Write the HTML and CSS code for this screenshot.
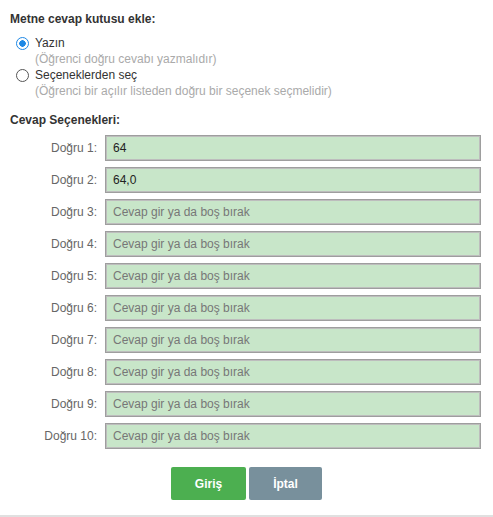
FILE: index.html
```html
<!DOCTYPE html>
<html>
<head>
<meta charset="utf-8">
<link rel="stylesheet" href="styles.css">
</head>
<body>
<div class="dialog">
  <div class="title">Metne cevap kutusu ekle:</div>
  <div class="options">
    <label class="option">
      <input type="radio" name="mode" class="radio" checked>
      <span class="option-text">
        <span class="option-label">Yazın</span>
        <span class="option-hint">(Öğrenci doğru cevabı yazmalıdır)</span>
      </span>
    </label>
    <label class="option">
      <input type="radio" name="mode" class="radio">
      <span class="option-text">
        <span class="option-label">Seçeneklerden seç</span>
        <span class="option-hint">(Öğrenci bir açılır listeden doğru bir seçenek seçmelidir)</span>
      </span>
    </label>
  </div>
  <div class="title section">Cevap Seçenekleri:</div>
  <div class="answers">
    <label class="answer-label">Doğru 1:</label><input class="answer" type="text" value="64">
    <label class="answer-label">Doğru 2:</label><input class="answer" type="text" value="64,0">
    <label class="answer-label">Doğru 3:</label><input class="answer" type="text" placeholder="Cevap gir ya da boş bırak">
    <label class="answer-label">Doğru 4:</label><input class="answer" type="text" placeholder="Cevap gir ya da boş bırak">
    <label class="answer-label">Doğru 5:</label><input class="answer" type="text" placeholder="Cevap gir ya da boş bırak">
    <label class="answer-label">Doğru 6:</label><input class="answer" type="text" placeholder="Cevap gir ya da boş bırak">
    <label class="answer-label">Doğru 7:</label><input class="answer" type="text" placeholder="Cevap gir ya da boş bırak">
    <label class="answer-label">Doğru 8:</label><input class="answer" type="text" placeholder="Cevap gir ya da boş bırak">
    <label class="answer-label">Doğru 9:</label><input class="answer" type="text" placeholder="Cevap gir ya da boş bırak">
    <label class="answer-label">Doğru 10:</label><input class="answer" type="text" placeholder="Cevap gir ya da boş bırak">
  </div>
  <div class="buttons">
    <button class="btn btn-ok">Giriş</button>
    <button class="btn btn-cancel">İptal</button>
  </div>
</div>
</body>
</html>
```
FILE: styles.css
```css
html, body {
  margin: 0;
  padding: 0;
  background: #fff;
}
body {
  font-family: "Liberation Sans", Arial, sans-serif;
  font-size: 12px;
  color: #333;
}
.dialog {
  width: 493px;
  box-sizing: border-box;
  padding: 11px 12px 15px 10px;
  border-bottom: 2px solid #e0e0e0;
}
.title {
  font-weight: bold;
  font-size: 12px;
  line-height: 16px;
  color: #333;
}
.section {
  margin-top: 13px;
}
.options {
  margin-top: 8px;
  padding-left: 6px;
  display: flex;
  flex-direction: column;
}
.option {
  display: flex;
  align-items: flex-start;
  gap: 6px;
}
.radio {
  appearance: none;
  -webkit-appearance: none;
  margin: 2px 0 0 0;
  width: 13px;
  height: 13px;
  border: 1px solid #555;
  border-radius: 50%;
  box-sizing: border-box;
  background: #fff;
  flex: none;
}
.radio:checked {
  border-color: #1e88e5;
  background: radial-gradient(circle, #1e88e5 0 3px, #fff 3.5px);
}
.option-text {
  display: flex;
  flex-direction: column;
  line-height: 16px;
}
.option-label {
  color: #333;
}
.option-hint {
  color: #aaa;
}
.answers {
  margin-top: 7px;
  display: grid;
  grid-template-columns: 87px 1fr;
  column-gap: 8px;
  row-gap: 6px;
  align-items: center;
}
.answer-label {
  text-align: right;
  color: #666;
}
.answer {
  height: 26px;
  box-sizing: border-box;
  border: 1px solid #9e9e9e;
  box-shadow: inset 0 0 0 1px #bdbdbd;
  background: #c8e6c9;
  padding: 0 7px;
  margin: 0;
  font-family: "Liberation Sans", Arial, sans-serif;
  font-size: 12px;
  color: #222;
  outline: none;
}
.answer::placeholder {
  color: #777;
}
.buttons {
  margin-top: 18px;
  display: flex;
  justify-content: center;
  gap: 3px;
  padding-left: 2px;
}
.btn {
  height: 33px;
  border: none;
  border-radius: 2px;
  color: #fff;
  font-family: "Liberation Sans", Arial, sans-serif;
  font-weight: bold;
  font-size: 12px;
  padding: 0;
}
.btn-ok {
  width: 75px;
  background: #4caf50;
}
.btn-cancel {
  width: 73px;
  background: #78909c;
}
```
